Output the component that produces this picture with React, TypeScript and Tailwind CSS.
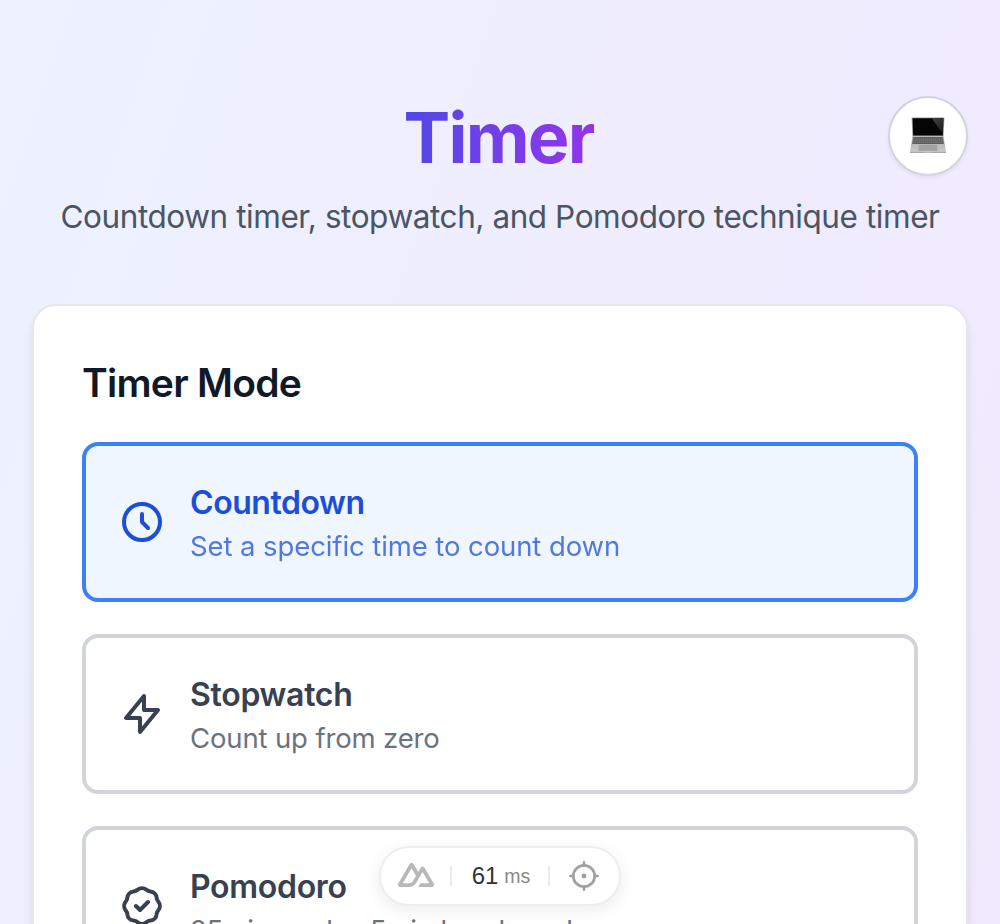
type Mode = { title: string; detail: string; icon: string; active?: boolean; titleSpacing: string; detailSpacing: string };

const modes: Mode[] = [
  {
    title: "Countdown",
    detail: "Set a specific time to count down",
    icon: "M12 8v4l3 3m6-3a9 9 0 11-18 0 9 9 0 0118 0z",
    active: true,
    titleSpacing: "tracking-[-0.45px]",
    detailSpacing: "tracking-[-0.09px]",
  },
  {
    title: "Stopwatch",
    detail: "Count up from zero",
    icon: "M13 10V3L4 14h7v7l9-11h-7z",
    titleSpacing: "tracking-[-0.3px]",
    detailSpacing: "tracking-[-0.14px]",
  },
  {
    title: "Pomodoro",
    detail: "25min work – 5min break cycles",
    icon: "M9 12l2 2 4-4M7.835 4.697a3.42 3.42 0 001.946-.806 3.42 3.42 0 014.438 0 3.42 3.42 0 001.946.806 3.42 3.42 0 013.138 3.138 3.42 3.42 0 00.806 1.946 3.42 3.42 0 010 4.438 3.42 3.42 0 00-.806 1.946 3.42 3.42 0 01-3.138 3.138 3.42 3.42 0 00-1.946.806 3.42 3.42 0 01-4.438 0 3.42 3.42 0 00-1.946-.806 3.42 3.42 0 01-3.138-3.138 3.42 3.42 0 00-.806-1.946 3.42 3.42 0 010-4.438 3.42 3.42 0 00.806-1.946 3.42 3.42 0 013.138-3.138z",
    titleSpacing: "tracking-[-0.3px]",
    detailSpacing: "tracking-[-0.15px]",
  },
];

function ModeCard({ mode }: { mode: Mode }) {
  const box = mode.active ? "border-[#3b82f6] bg-[#eff6ff] text-[#1d4ed8]" : "border-[#d1d5db] bg-white text-[#374151]";
  return (
    <button className={`flex h-40 w-full shrink-0 items-center gap-6 rounded-2xl border-4 px-8 text-left ${box}`}>
      <svg className="size-12 shrink-0" viewBox="0 0 24 24" fill="none" stroke="currentColor" strokeWidth="2" strokeLinecap="round" strokeLinejoin="round">
        <path d={mode.icon} />
      </svg>
      <span className="flex flex-col whitespace-nowrap">
        <span className={`pt-px text-[32px] leading-[48px] font-semibold ${mode.titleSpacing}`}>{mode.title}</span>
        <span className={`text-[27.5px] leading-[39px] ${mode.detailSpacing} ${mode.active ? "opacity-75" : "text-[#6b7280]"}`}>{mode.detail}</span>
      </span>
    </button>
  );
}

function Laptop() {
  return (
    <svg className="h-[38px] w-[38px]" viewBox="0 0 38 38">
      <defs>
        <linearGradient id="glare" x1="0" y1="0" x2="1" y2="1">
          <stop offset="0" stopColor="#484848" />
          <stop offset="1" stopColor="#151515" />
        </linearGradient>
        <linearGradient id="deck" x1="0" y1="0" x2="0" y2="1">
          <stop offset="0" stopColor="#a9a9a9" />
          <stop offset="1" stopColor="#c8c8c8" />
        </linearGradient>
      </defs>
      <path d="M2.6 0.4h32.8l-.8 19H3.4z" fill="#9a9a9a" />
      <path d="M3.6 1.2h30.8L33.8 18.6H4.2z" fill="#050505" />
      <path d="M23 1.2h11.4l-.6 16z" fill="url(#glare)" />
      <path d="M3.4 19.4h31.2L37 34.8H1z" fill="url(#deck)" />
      <path d="M4.3 19.9h29.4l1.1 7H3.2z" fill="#5a5a5a" />
      <path d="M4.2 21.8h29.6M3.9 23.6h30.2M3.6 25.4h30.8" stroke="#9a9a9a" strokeWidth=".6" strokeDasharray="1.4 .6" />
      <path d="M10.4 28h17.2l.6 5.4H9.8z" fill="#a2a2a2" stroke="#959595" strokeWidth=".4" />
      <path d="M1 34.8h36v.9H1z" fill="#8b8b8b" />
      <path d="M14 34.7h10v.6H14z" fill="#d8d8d8" />
    </svg>
  );
}

function Divider() {
  return <span className="h-5 w-[2px] bg-[#ececec]" />;
}

function DevPill() {
  return (
    <div className="absolute bottom-[18px] left-1/2 flex h-[60px] w-[242px] -translate-x-1/2 items-center rounded-full border-2 border-[#eeeeee] bg-white pl-[17px] shadow-[0_4px_16px_rgba(0,0,0,0.08)]">
      <svg className="size-9 -translate-y-px text-[#b8b8b8]" viewBox="0 0 324 324" fill="currentColor">
        <path d="M181.767 270H302.211C306.037 270 309.795 269.003 313.108 267.107C316.421 265.211 319.172 262.484 321.084 259.2C322.996 255.915 324.002 252.19 324 248.399C323.998 244.607 322.989 240.883 321.075 237.601L240.187 98.7439C238.275 95.4607 235.525 92.7342 232.213 90.8385C228.901 88.9429 225.143 87.9449 221.318 87.9449C217.494 87.9449 213.736 88.9429 210.424 90.8385C207.112 92.7342 204.361 95.4607 202.449 98.7439L181.767 134.272L141.329 64.7975C139.416 61.5145 136.664 58.7884 133.351 56.8931C130.038 54.9978 126.28 54 122.454 54C118.629 54 114.871 54.9978 111.558 56.8931C108.245 58.7884 105.493 61.5145 103.58 64.7975L2.92554 237.601C1.01067 240.883 0 244.607 0 248.399C0 252.19 1.00407 255.915 2.91605 259.2C4.82803 262.484 7.57884 265.211 10.8918 267.107C14.2047 269.003 17.963 270 21.7886 270H97.3936C127.349 270 149.44 256.959 164.641 231.517L201.546 168.172L221.313 134.272L280.637 236.1H201.546L181.767 270ZM96.1611 236.065L43.3984 236.054L122.49 100.291L161.953 168.172L135.531 213.543C125.436 230.051 113.968 236.065 96.1611 236.065Z" />
      </svg>
      <div className="ml-4 flex items-center">
        <Divider />
      </div>
      <div className="flex w-[96px] items-baseline justify-center gap-[6px] pl-[2px] font-['Liberation_Sans',sans-serif] text-[#333333]">
        <span className="text-[24px] leading-8">61</span>
        <span className="-translate-y-px text-[19.5px] leading-8 text-[#888888]">ms</span>
      </div>
      <Divider />
      <svg className="ml-[16px] size-9 text-[#a0a0a0]" viewBox="0 0 36 36" fill="none" stroke="currentColor" strokeWidth="2.7">
        <circle cx="18" cy="18" r="10.7" />
        <path d="M18 4.4v3M18 28.6v3M4.4 18h3M28.6 18h3" strokeLinecap="round" />
        <circle cx="18" cy="18" r="2.4" fill="currentColor" stroke="none" />
      </svg>
    </div>
  );
}

export default function App() {
  return (
    <div className="relative h-[924px] overflow-hidden bg-linear-to-br from-[#edf2ff] via-[#f0ebfe] to-[#f1e7fd] bg-[length:100%_3000px] bg-no-repeat px-8 pt-24 font-['Inter',sans-serif]">
      <header className="flex h-[144px] flex-col items-center">
        <div className="grid h-20 w-full grid-cols-[80px_1fr_80px] items-center">
          <span />
          <h1 className="flex justify-center">
            <span className="-translate-x-px translate-y-[2px] bg-linear-to-r from-[#4f46e5] to-[#9333ea] bg-clip-text text-[70px] leading-[80px] font-bold tracking-[-1.8px] text-transparent">Timer</span>
          </h1>
          <button className="flex size-20 items-center justify-center rounded-full border-2 border-[#d1d5db] bg-white shadow-[0_2px_4px_rgba(0,0,0,0.06)]">
            <Laptop />
          </button>
        </div>
        <p className="mt-[17px] text-[31.5px] leading-[48px] tracking-[-0.43px] whitespace-nowrap text-[#4b5563]">Countdown timer, stopwatch, and Pomodoro technique timer</p>
      </header>
      <main className="mt-16 flex h-[900px] flex-col rounded-3xl border-2 border-[#e5e7eb] bg-white px-12 pt-[49px] shadow-[0_8px_12px_-2px_rgba(0,0,0,0.1),0_4px_8px_-4px_rgba(0,0,0,0.1)]">
        <h2 className="mb-[31px] text-[39px] leading-[56px] font-semibold tracking-[-0.75px] text-[#111827]">Timer Mode</h2>
        <div className="flex flex-col gap-8">
          {modes.map((mode) => (
            <ModeCard key={mode.title} mode={mode} />
          ))}
        </div>
      </main>
      <DevPill />
    </div>
  );
}
